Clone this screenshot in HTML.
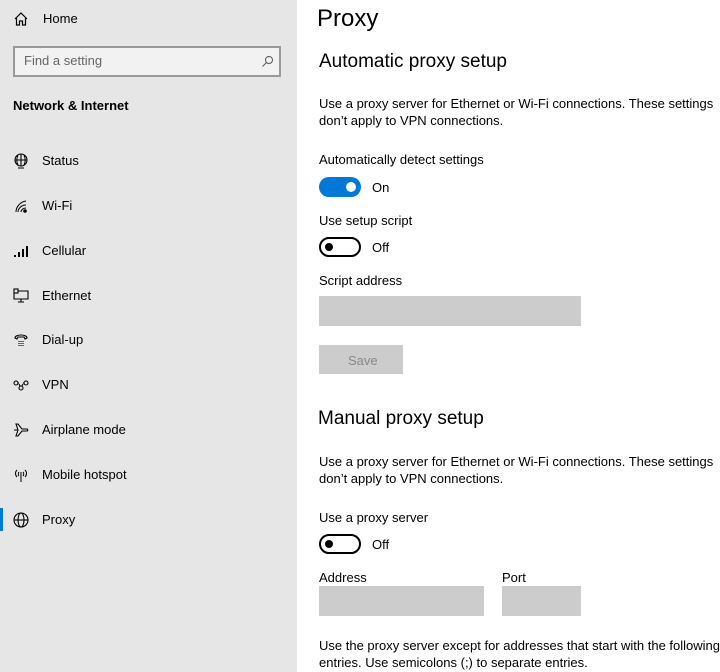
<!DOCTYPE html><html><head><style>
*{margin:0;padding:0;box-sizing:border-box}
body{width:720px;height:672px;overflow:hidden;font-family:"Liberation Sans",sans-serif;color:#000;background:#fff;position:relative;font-size:13px}
.side{position:absolute;left:0;top:0;width:297px;height:672px;background:#e6e6e6}
.a{position:absolute;white-space:nowrap}
.ic{position:absolute;left:13px;width:16px;height:16px}
.sw{position:absolute;width:42px;height:20px;border-radius:10px}
.off{border:2px solid #000;background:#fff}
.off::after{content:"";position:absolute;left:4px;top:4px;width:8px;height:8px;border-radius:50%;background:#000}
.on{background:#0078d7}
.on::after{content:"";position:absolute;right:5px;top:5px;width:10px;height:10px;border-radius:50%;background:#fff}
.box{position:absolute;background:#ccc}
</style></head><body>
<div class="side">
<svg class="ic" style="top:11px" viewBox="0 0 16 16" fill="none" stroke="#000" stroke-width="1.2"><path d="M2 8L8 2l6 6M3.5 7v7h3v-4h3v4h3V7"/></svg>
<div class="a" style="left:43px;top:11px;font-size:13px">Home</div>
<div class="a" style="left:13px;top:46px;width:268px;height:31px;border:2px solid #999;background:#f2f2f2"></div>
<div class="a" style="left:24px;top:53px;color:#666;font-size:13px">Find a setting</div>
<svg class="a" style="left:261px;top:55px" width="13" height="13" viewBox="0 0 13 13" fill="none" stroke="#555"><circle cx="8" cy="5" r="3.5"/><path d="M5.5 7.5L1.5 11.5"/></svg>
<div class="a" style="left:13px;top:98px;font-weight:bold;font-size:13px">Network &amp; Internet</div>
<svg class="ic" style="top:153px" viewBox="0 0 16 16" fill="none" stroke="#000" stroke-width="1.1"><circle cx="8" cy="7" r="6"/><path d="M2 7h12M8 1v12M5 2c-1.5 3-1.5 7 0 10M11 2c1.5 3 1.5 7 0 10M5 15h6"/></svg>
<div class="a" style="left:42px;top:153px">Status</div>
<svg class="ic" style="top:198px" viewBox="0 0 16 16" fill="none" stroke="#000" stroke-width="1"><path d="M3 14C3 9 7 4 13 3M5 14c0-3 3-7 8-7M8 14c0-2 2-4 5-4"/><circle cx="12" cy="13" r="1.3" fill="#000"/></svg>
<div class="a" style="left:42px;top:198px">Wi-Fi</div>
<svg class="ic" style="top:243px" viewBox="0 0 16 16" fill="#000"><rect x="1" y="12" width="2" height="2"/><rect x="5" y="9" width="2" height="5"/><rect x="9" y="6" width="2" height="8"/><rect x="13" y="3" width="2" height="11"/></svg>
<div class="a" style="left:42px;top:243px">Cellular</div>
<svg class="ic" style="top:288px" viewBox="0 0 16 16" fill="none" stroke="#000" stroke-width="1.1"><rect x="1" y="1" width="4" height="4"/><path d="M5 3h10v8H1V5M8 11v3M5 14h6"/></svg>
<div class="a" style="left:42px;top:288px">Ethernet</div>
<svg class="ic" style="top:332px" viewBox="0 0 16 16" fill="none" stroke="#000" stroke-width="1.1"><path d="M2 6c0-4 12-4 12 0l-2 1-1-2H5L4 7z"/><path d="M6 9v5M8 9v5M10 9v5" stroke-dasharray="1 1"/></svg>
<div class="a" style="left:42px;top:332px">Dial-up</div>
<svg class="ic" style="top:377px" viewBox="0 0 16 16" fill="none" stroke="#000" stroke-width="1.1"><circle cx="3" cy="6" r="2"/><circle cx="13" cy="6" r="2"/><circle cx="8" cy="11" r="2"/><path d="M5 6h1M10 6h1M6 7l1 2M10 7l-1 2"/></svg>
<div class="a" style="left:42px;top:377px">VPN</div>
<svg class="ic" style="top:422px" viewBox="0 0 16 16" fill="none" stroke="#000" stroke-width="1.1"><path d="M1 8h4L3 2h2l4 5h5c1 0 1 2 0 2H9l-4 5H3l2-6"/></svg>
<div class="a" style="left:42px;top:422px">Airplane mode</div>
<svg class="ic" style="top:467px" viewBox="0 0 16 16" fill="none" stroke="#000" stroke-width="1"><path d="M8 5v10M4 3c-2 2-2 5 0 7M12 3c2 2 2 5 0 7M6 5c-1 1-1 3 0 4M10 5c1 1 1 3 0 4"/></svg>
<div class="a" style="left:42px;top:467px">Mobile hotspot</div>
<div class="a" style="left:0;top:508px;width:3px;height:23px;background:#0078d7"></div>
<svg class="ic" style="top:512px" viewBox="0 0 16 16" fill="none" stroke="#000" stroke-width="1.1"><circle cx="8" cy="8" r="7"/><ellipse cx="8" cy="8" rx="3" ry="7"/><path d="M1 8h14"/></svg>
<div class="a" style="left:42px;top:512px">Proxy</div>
</div>
<div class="a" style="left:317px;top:5px;font-size:24px">Proxy</div>
<div class="a" style="left:319px;top:51px;font-size:19px">Automatic proxy setup</div>
<div class="a" style="left:319px;top:95px;line-height:17px">Use a proxy server for Ethernet or Wi-Fi connections. These settings<br>don’t apply to VPN connections.</div>
<div class="a" style="left:319px;top:152px">Automatically detect settings</div>
<div class="sw on" style="left:319px;top:177px"></div>
<div class="a" style="left:372px;top:180px">On</div>
<div class="a" style="left:319px;top:213px">Use setup script</div>
<div class="sw off" style="left:319px;top:237px"></div>
<div class="a" style="left:372px;top:240px">Off</div>
<div class="a" style="left:319px;top:273px">Script address</div>
<div class="box" style="left:319px;top:296px;width:262px;height:30px"></div>
<div class="box" style="left:319px;top:345px;width:84px;height:29px"></div>
<div class="a" style="left:348px;top:353px;color:#888">Save</div>
<div class="a" style="left:318px;top:408px;font-size:19px">Manual proxy setup</div>
<div class="a" style="left:319px;top:453px;line-height:17px">Use a proxy server for Ethernet or Wi-Fi connections. These settings<br>don’t apply to VPN connections.</div>
<div class="a" style="left:319px;top:510px">Use a proxy server</div>
<div class="sw off" style="left:319px;top:534px"></div>
<div class="a" style="left:372px;top:537px">Off</div>
<div class="a" style="left:319px;top:570px">Address</div>
<div class="a" style="left:502px;top:570px">Port</div>
<div class="box" style="left:319px;top:586px;width:165px;height:30px"></div>
<div class="box" style="left:502px;top:586px;width:79px;height:30px"></div>
<div class="a" style="left:319px;top:637px;line-height:17px">Use the proxy server except for addresses that start with the following<br>entries. Use semicolons (;) to separate entries.</div>
</body></html>
